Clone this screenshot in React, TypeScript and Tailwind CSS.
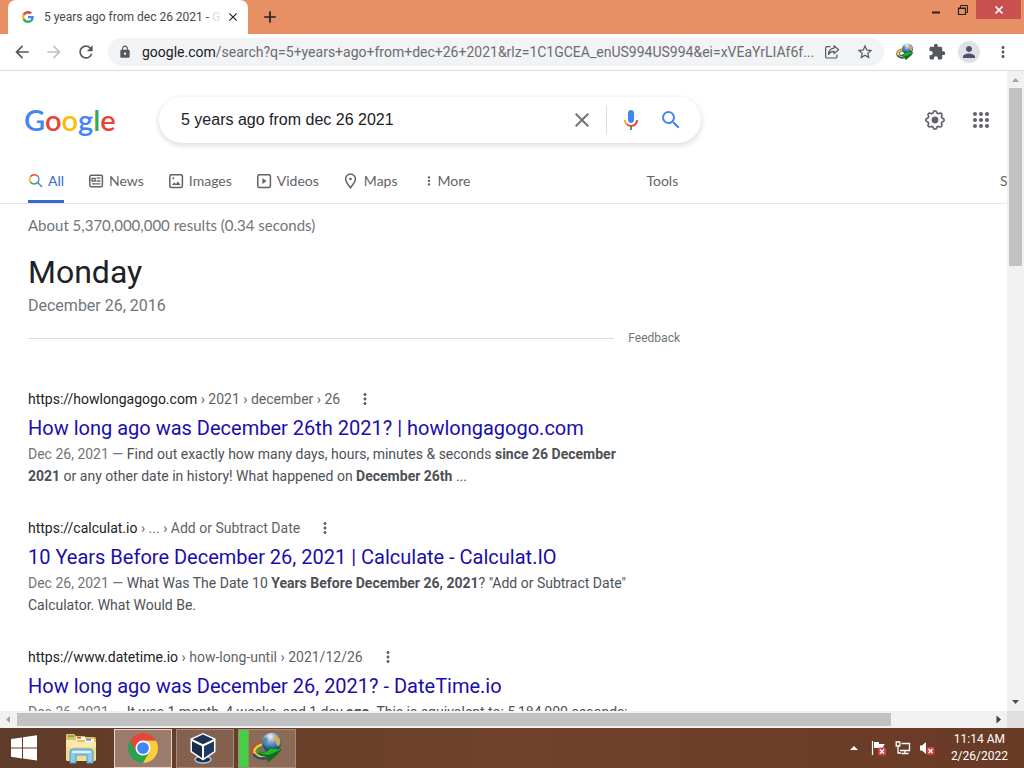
import type { ReactNode } from "react";
import {
  MdArrowBack,
  MdArrowForward,
  MdRefresh,
  MdLock,
  MdStarBorder,
  MdExtension,
  MdPerson,
  MdMoreVert,
  MdClose,
  MdAdd,
  MdSearch,
} from "react-icons/md";

function GoogleG({ className }: { className?: string }) {
  return (
    <svg viewBox="0 0 48 48" className={className} aria-hidden="true">
      <path fill="#EA4335" d="M24 9.5c3.54 0 6.71 1.22 9.21 3.6l6.85-6.85C35.9 2.38 30.47 0 24 0 14.62 0 6.51 5.38 2.56 13.22l7.98 6.19C12.43 13.72 17.74 9.5 24 9.5z" />
      <path fill="#4285F4" d="M46.98 24.55c0-1.57-.15-3.09-.38-4.55H24v9.02h12.94c-.58 2.96-2.26 5.48-4.78 7.18l7.73 6c4.51-4.18 7.09-10.36 7.09-17.65z" />
      <path fill="#FBBC05" d="M10.53 28.59c-.48-1.45-.76-2.99-.76-4.59s.27-3.14.76-4.59l-7.98-6.19C.92 16.46 0 20.12 0 24c0 3.88.92 7.54 2.56 10.78l7.97-6.19z" />
      <path fill="#34A853" d="M24 48c6.48 0 11.93-2.13 15.89-5.81l-7.73-6c-2.15 1.45-4.92 2.3-8.16 2.3-6.26 0-11.57-4.22-13.47-9.91l-7.98 6.19C6.51 42.62 14.62 48 24 48z" />
    </svg>
  );
}

function ShareIcon() {
  return (
    <svg viewBox="0 0 16 16" className="size-4" fill="none" stroke="currentColor" strokeWidth="1.2" strokeLinejoin="round" aria-hidden="true">
      <path d="M6.5 2.6H3.2Q1.6 2.6 1.6 4.2V12.4Q1.6 14 3.2 14H11.4Q13 14 13 12.4V10.5" />
      <path d="M10 1.8L14.6 5.7L10 9.6V7.3C7.4 7.3 5.6 8.4 4.4 10.4C4.6 6.8 6.6 4.6 10 4.1Z" />
    </svg>
  );
}

function IdmGlobe({ className }: { className?: string }) {
  return (
    <svg viewBox="0 0 32 32" className={className} aria-hidden="true">
      <defs>
        <radialGradient id="idmSphere" cx="0.45" cy="0.2" r="0.85">
          <stop offset="0" stopColor="#eef5fb" />
          <stop offset="0.35" stopColor="#7fa6d2" />
          <stop offset="0.7" stopColor="#2c5c9c" />
          <stop offset="1" stopColor="#122c55" />
        </radialGradient>
      </defs>
      <g fill="none" transform="rotate(-18 11 18)">
        <ellipse cx="11" cy="18" rx="10" ry="7" stroke="#d9422b" strokeWidth="2" />
        <ellipse cx="11.5" cy="18.3" rx="8.4" ry="5.6" stroke="#f9cb2d" strokeWidth="2.4" />
        <ellipse cx="12" cy="18.6" rx="6.4" ry="3.8" stroke="#2fa53a" strokeWidth="2" />
      </g>
      <path d="M2.5 22Q7 28.5 17 26" fill="none" stroke="#23488f" strokeWidth="2.2" />
      <circle cx="20.5" cy="10.5" r="9.8" fill="url(#idmSphere)" />
      <path d="M23 3Q27 3.5 29.4 8.5Q30 12 27.5 14.5Q24 12 25 9Q21.5 7 23 3Z" fill="#e3b23c" opacity="0.9" />
      <path d="M12 7Q15 4.5 17 7Q16.5 10 13.5 12Q11 10 12 7Z" fill="#4e8d62" opacity="0.7" />
      <path d="M6.5 21Q15 21 18.5 15.5L31 17L27 22L17 30.5L15.5 24.5Q10 25 6.5 21Z" fill="#0c6e1e" />
      <path d="M9 21Q17 20.5 19 16.5L30 17.5L19 22.5Q13 23.5 9 21Z" fill="#25b52c" />
    </svg>
  );
}

function ChromeLogo({ className }: { className?: string }) {
  return (
    <svg viewBox="0 0 48 48" className={className} aria-hidden="true">
      <path d="M3.22 12A24 24 0 0 0 24 48L34.4 30L24 24L13.6 30Z" fill="#2ea04f" />
      <path d="M44.78 12A24 24 0 0 1 24 48L34.4 30L24 12Z" fill="#fdce3c" />
      <path d="M3.22 12A24 24 0 0 1 44.78 12H24L13.6 30Z" fill="#e5463b" />
      <circle cx="24" cy="24" r="12" fill="#fff" />
      <circle cx="24" cy="24" r="9.4" fill="#4285f4" />
    </svg>
  );
}

function VirtualBoxLogo({ className }: { className?: string }) {
  return (
    <svg viewBox="0 0 32 32" className={className} aria-hidden="true">
      <ellipse cx="16" cy="27.5" rx="8" ry="3.6" fill="#182f52" stroke="#a9bdd6" strokeWidth="1.6" />
      <path d="M16 1L28.5 6.5V20L16 28.5L3.5 20V6.5Z" fill="#fff" />
      <path d="M16 2.6L26.4 7.2L16 12.2L5.6 7.2Z" fill="#1c3355" />
      <path d="M5 9.2L15 14.2V26L5 19.2Z" fill="#182c4c" />
      <path d="M27 9.2L17 14.2V26L27 19.2Z" fill="#1f3a63" />
    </svg>
  );
}

function ExplorerIcon({ className }: { className?: string }) {
  return (
    <svg viewBox="0 0 34 32" className={className} aria-hidden="true">
      <path d="M2 3Q2 2 3 2H10L12 4H20L22 5H30Q32 5 32 7V27H2Z" fill="#e6bf62" />
      <rect x="4" y="3.2" width="6" height="2" fill="#5cb95a" />
      <rect x="12" y="5" width="9" height="3" fill="#fff" />
      <rect x="13" y="5" width="4" height="1.6" fill="#d94b3a" />
      <rect x="21" y="7" width="9" height="3" fill="#fff" />
      <rect x="22" y="7" width="5" height="1.6" fill="#4c94d8" />
      <path d="M2 8H12L14 10H32V27Q32 29 30 29H4Q2 29 2 27Z" fill="#f9e9af" />
      <path d="M2 15H32V27Q32 29 30 29H4Q2 29 2 27Z" fill="#f5dd8d" />
      <path d="M6 31V20Q6 17 9 17H26Q29 17 29 20V31H23V23H12V31Z" fill="#8ccbee" stroke="#4a9bd0" strokeWidth="1" />
      <path d="M8 20Q8 19 10 19H25Q27 19 27 20V21H8Z" fill="#dff3fd" />
    </svg>
  );
}

const GEAR_PATH = Array.from({ length: 96 }, (_, i) => {
  const angle = (i / 96) * Math.PI * 2;
  const radius = 8.1 + Math.tanh(1.6 * Math.cos(8 * angle)) * 1.05;
  return `${i ? "L" : "M"}${(12 + radius * Math.sin(angle)).toFixed(2)} ${(12 - radius * Math.cos(angle)).toFixed(2)}`;
}).join("");

function GearIcon() {
  return (
    <svg viewBox="0 0 24 24" className="size-6" aria-hidden="true">
      <path d={GEAR_PATH + "Z"} fill="none" stroke="#5f6368" strokeWidth="1.7" strokeLinejoin="round" />
      <circle cx="12" cy="12" r="3.4" fill="#5f6368" />
    </svg>
  );
}

function AppsIcon() {
  return (
    <svg viewBox="0 0 24 24" className="size-6" fill="#5f6368" aria-hidden="true">
      {[6, 12, 18].map((cy) => [6, 12, 18].map((cx) => <circle key={`${cx}-${cy}`} cx={cx} cy={cy} r="2" />))}
    </svg>
  );
}

function MicIcon() {
  return (
    <svg viewBox="0 0 24 24" className="size-6" aria-hidden="true">
      <path fill="#4285f4" d="M12 15c1.66 0 3-1.31 3-2.97V4.98C15 3.34 13.66 2 12 2S9 3.34 9 4.98v7.05C9 13.69 10.34 15 12 15z" />
      <path fill="#34a853" d="M11 18.08h2V22h-2z" />
      <path fill="#f4b400" d="M7.05 16.87C5.78 15.59 5 13.8 5 12h2c0 1.37.56 2.52 1.46 3.41z" />
      <path fill="#ea4335" d="M12 16.93a4.97 4.97 0 0 1-3.54-1.55l-1.41 1.49A6.97 6.97 0 0 0 12 18.94c3.87 0 6.99-2.92 6.99-7h-1.99c0 2.92-2.24 4.99-5 4.99z" />
    </svg>
  );
}

function ColourSearchIcon() {
  return (
    <svg viewBox="0 0 16 16" className="size-4" fill="none" strokeWidth="1.5" aria-hidden="true">
      <path d="M2.4 9A4.6 4.6 0 0 1 2.6 3.5" stroke="#f4b400" />
      <path d="M2.6 3.5A4.6 4.6 0 0 1 9.5 3" stroke="#ea4335" />
      <path d="M9.5 3A4.6 4.6 0 0 1 9.6 9.4L14 14" stroke="#4285f4" />
      <path d="M9.6 9.4A4.6 4.6 0 0 1 2.4 9" stroke="#34a853" />
    </svg>
  );
}

function LineIcon({ children }: { children: ReactNode }) {
  return (
    <svg viewBox="0 0 16 16" className="size-4" fill="none" stroke="#5f6368" strokeWidth="1.5" aria-hidden="true">
      {children}
    </svg>
  );
}

const TABS: { label: string; icon: ReactNode }[] = [
  {
    label: "News",
    icon: (
      <LineIcon>
        <rect x="1.8" y="2.3" width="12.6" height="11.4" rx="1.5" />
        <path d="M4 5.3H7.2V8H4ZM8.6 5.2H12.4M8.6 8H12.4M4 10.8H12.4" strokeWidth="1.3" />
      </LineIcon>
    ),
  },
  {
    label: "Images",
    icon: (
      <LineIcon>
        <rect x="1.8" y="1.8" width="12.6" height="12.6" rx="1.5" />
        <path d="M4 12L6.3 9.2L8 11L10 8.5L12.4 12Z" fill="#5f6368" stroke="none" />
        <circle cx="5.3" cy="5.3" r="1" fill="#5f6368" stroke="none" />
      </LineIcon>
    ),
  },
  {
    label: "Videos",
    icon: (
      <LineIcon>
        <rect x="1.8" y="1.8" width="12.6" height="12.6" rx="1.5" />
        <path d="M6.4 5.2L10.6 8.1L6.4 11Z" fill="#5f6368" stroke="none" />
      </LineIcon>
    ),
  },
  {
    label: "Maps",
    icon: (
      <LineIcon>
        <path d="M7.5 14.8C5.5 12 2.6 9 2.6 6A4.9 4.9 0 0 1 12.4 6C12.4 9 9.5 12 7.5 14.8Z" />
        <circle cx="7.5" cy="6" r="1.3" fill="#5f6368" stroke="none" />
      </LineIcon>
    ),
  },
];

function Result({
  site,
  crumbs,
  title,
  children,
}: {
  site: string;
  crumbs: string;
  title: string;
  children: ReactNode;
}) {
  return (
    <article className="mb-[31px]">
      <div className="flex h-5 items-center text-sm text-[#5f6368]">
        <cite className="not-italic">
          <span className="text-[#202124]">{site}</span> {crumbs}
        </cite>
        <button type="button" aria-label="About this result" className="ml-4">
          <MdMoreVert className="size-[18px]" />
        </button>
      </div>
      <h3 className="mt-1.5 text-xl leading-[26px] text-[#1a0dab]">
        <a href="#">{title}</a>
      </h3>
      <p className="mt-0.5 text-sm leading-[22px] text-[#4d5156]">{children}</p>
    </article>
  );
}

function DateLabel() {
  return <span className="text-[#70757a]">Dec 26, 2021 — </span>;
}

function VerticalScrollbar() {
  return (
    <div className="flex w-[17px] shrink-0 flex-col items-center bg-[#f1f1f1]">
      <svg viewBox="0 0 17 17" className="size-[17px]" aria-hidden="true">
        <path d="M5 11L8.5 7L12 11Z" fill="#a3a3a3" />
      </svg>
      <div className="h-[178px] w-[13px] bg-[#c1c1c1]" />
      <svg viewBox="0 0 17 17" className="mt-auto size-[17px]" aria-hidden="true">
        <path d="M5 6L8.5 10L12 6Z" fill="#505050" />
      </svg>
    </div>
  );
}

export default function App() {
  return (
    <div className="flex h-screen flex-col overflow-hidden bg-white font-[Roboto,sans-serif]">
      <header className="flex h-[34px] shrink-0 bg-[#e79066] pl-2">
        <div className="flex w-60 items-center rounded-t-lg bg-white pr-2 pl-3.5 text-xs text-[#45474a]">
          <GoogleG className="size-3 shrink-0" />
          <span className="ml-2.5 flex-1 whitespace-nowrap">
            5 years ago from dec 26 2021 - <span className="text-[#dcdcdc]">G</span>
          </span>
          <button type="button" aria-label="Close tab" className="text-[#202124]">
            <MdClose className="size-3.5" />
          </button>
        </div>
        <button type="button" aria-label="New tab" className="ml-3 text-[#202124]">
          <MdAdd className="size-5" />
        </button>
        <div className="ml-auto flex items-start">
          <button type="button" aria-label="Minimize" className="flex h-[19px] w-7 items-center justify-center">
            <svg viewBox="0 0 10 10" className="size-2.5" aria-hidden="true">
              <path d="M1 7.5H9" stroke="#2b1d18" strokeWidth="2" />
            </svg>
          </button>
          <button type="button" aria-label="Restore" className="flex h-[19px] w-[26px] items-center justify-center">
            <svg viewBox="0 0 12 12" className="size-3" fill="none" stroke="#2b1d18" aria-hidden="true">
              <path d="M1.5 4.5H8.5V10.5H1.5ZM1 4H9" strokeWidth="1.2" />
              <path d="M3.5 4V1.5H10.5V8.5H8.5" />
            </svg>
          </button>
          <button type="button" aria-label="Close window" className="mr-[3px] flex h-[19px] w-[45px] items-center justify-center bg-[#c8504f] text-white">
            <svg viewBox="0 0 10 10" className="size-2.5" stroke="currentColor" strokeWidth="1.7" aria-hidden="true">
              <path d="M1.5 1.5L8.5 8.5M8.5 1.5L1.5 8.5" />
            </svg>
          </button>
        </div>
      </header>

      <div className="flex h-[37px] shrink-0 items-center border-b border-[#d9dbde] bg-white pr-3 pl-3 text-[#55585c]">
        <button type="button" aria-label="Back">
          <MdArrowBack className="size-5" />
        </button>
        <button type="button" aria-label="Forward" className="ml-3 text-[#bfc1c3]">
          <MdArrowForward className="size-5" />
        </button>
        <button type="button" aria-label="Reload" className="ml-3">
          <MdRefresh className="size-5" />
        </button>
        <div className="ml-3 flex h-7 min-w-0 flex-1 items-center rounded-full bg-[#f1f3f4] px-2.5">
          <MdLock className="size-3.5 shrink-0" />
          <p className="ml-2.5 min-w-0 flex-1 text-sm whitespace-nowrap text-[#6a6d71]">
            <span className="text-[#202124]">google.com</span>
            /search?q=5+years+ago+from+dec+26+2021&amp;rlz=1C1GCEA_enUS994US994&amp;ei=xVEaYrLIAf6f...
          </p>
          <button type="button" aria-label="Share" className="ml-2">
            <ShareIcon />
          </button>
          <button type="button" aria-label="Bookmark" className="ml-4">
            <MdStarBorder className="size-[18px]" />
          </button>
        </div>
        <button type="button" aria-label="Download manager" className="ml-3">
          <IdmGlobe className="size-[18px]" />
        </button>
        <button type="button" aria-label="Extensions" className="ml-3.5">
          <MdExtension className="size-[18px]" />
        </button>
        <button type="button" aria-label="Profile" className="ml-3 flex size-[22px] items-center justify-center rounded-full bg-[#dfe1e8] text-[#4d5366]">
          <MdPerson className="size-[18px]" />
        </button>
        <button type="button" aria-label="Menu" className="ml-3.5">
          <MdMoreVert className="size-[18px]" />
        </button>
      </div>

      <div className="flex min-h-0 flex-1">
        <main className="min-w-0 flex-1 overflow-hidden">
          <div className="flex items-center pt-[26px] pr-3.5 pl-6">
            <a href="#" aria-label="Google" className="w-[135px] shrink-0 font-[Lato,sans-serif] text-[29px] leading-[46px] font-semibold">
              <span className="text-[#4285f4]">G</span>
              <span className="text-[#ea4335]">o</span>
              <span className="text-[#fbbc05]">o</span>
              <span className="text-[#4285f4]">g</span>
              <span className="text-[#34a853]">l</span>
              <span className="text-[#ea4335]">e</span>
            </a>
            <form className="flex h-[46px] w-[542px] items-center rounded-full bg-white pr-[18px] pl-[22px] shadow-[0_2px_5px_1px_rgba(64,60,67,0.16)]">
              <input
                aria-label="Search"
                defaultValue="5 years ago from dec 26 2021"
                className="min-w-0 flex-1 bg-transparent font-['Liberation_Sans',sans-serif] text-base text-[#202124] outline-none"
              />
              <button type="button" aria-label="Clear" className="text-[#70757a]">
                <MdClose className="size-6" />
              </button>
              <span className="ml-3 h-7 border-l border-[#dadce0]" />
              <button type="button" aria-label="Search by voice" className="ml-3">
                <MicIcon />
              </button>
              <button type="submit" aria-label="Search" className="ml-4 text-[#4285f4]">
                <MdSearch className="size-6" />
              </button>
            </form>
            <button type="button" aria-label="Settings" className="ml-auto">
              <GearIcon />
            </button>
            <button type="button" aria-label="Google apps" className="ml-[22px]">
              <AppsIcon />
            </button>
          </div>

          <nav className="mt-4 flex h-[45px] items-stretch gap-6 border-b border-[#e4e6e9] pb-0 pl-7 font-[Lato,sans-serif] text-sm text-[#5f6368]">
            <a href="#" className="flex items-center gap-1 border-b-[3px] border-[#3569cc] pt-0.5 text-[#3569cc]">
              <ColourSearchIcon />
              All
            </a>
            {TABS.map((tab) => (
              <a key={tab.label} href="#" className="flex items-center gap-[5px]">
                {tab.icon}
                {tab.label}
              </a>
            ))}
            <button type="button" className="flex items-center gap-0.5">
              <MdMoreVert className="size-3.5" />
              More
            </button>
            <button type="button" className="ml-[152px]">
              Tools
            </button>
            <span className="ml-auto flex w-[7px] items-center">S</span>
          </nav>

          <div className="pl-7">
            <p className="mt-[9px] font-[Lato,sans-serif] text-[15px] leading-6 text-[#70757a]">
              About 5,370,000,000 results (0.34 seconds)
            </p>
            <section className="w-[652px]">
              <h2 className="mt-[15px] text-[32px] leading-10 text-[#202124]">Monday</h2>
              <p className="mt-0.5 text-base leading-6 text-[#70757a]">December 26, 2016</p>
              <div className="mt-2.5 flex h-5 items-center">
                <hr className="flex-1 border-[#dadce0]" />
                <a href="#" className="ml-3.5 text-xs text-[#70757a]">
                  Feedback
                </a>
              </div>
            </section>
            <section className="mt-[41px] w-[600px]">
              <Result
                site="https://howlongagogo.com"
                crumbs="› 2021 › december › 26"
                title="How long ago was December 26th 2021? | howlongagogo.com"
              >
                <DateLabel />
                Find out exactly how many days, hours, minutes &amp; seconds <b>since 26 December 2021</b> or any other
                date in history! What happened on <b>December 26th</b> ...
              </Result>
              <Result
                site="https://calculat.io"
                crumbs="› ... › Add or Subtract Date"
                title="10 Years Before December 26, 2021 | Calculate - Calculat.IO"
              >
                <DateLabel />
                What Was The Date 10 <b>Years Before December 26, 2021</b>? "Add or Subtract Date" Calculator. What
                Would Be.
              </Result>
              <Result
                site="https://www.datetime.io"
                crumbs="› how-long-until › 2021/12/26"
                title="How long ago was December 26, 2021? - DateTime.io"
              >
                <DateLabel />
                It was 1 month, 4 weeks, and 1 day <b>ago</b>. This is equivalent to: 5,184,000 seconds;
              </Result>
            </section>
          </div>
        </main>
        <VerticalScrollbar />
      </div>

      <div className="flex h-[17px] shrink-0 items-center bg-[#f1f1f1]">
        <svg viewBox="0 0 17 17" className="size-[17px]" aria-hidden="true">
          <path d="M10 5L6 8.5L10 12Z" fill="#a3a3a3" />
        </svg>
        <div className="h-[13px] w-[874px] bg-[#c1c1c1]" />
        <svg viewBox="0 0 17 17" className="ml-auto size-[17px]" aria-hidden="true">
          <path d="M6.5 4.5L11 8.5L6.5 12.5Z" fill="#404040" />
        </svg>
        <div className="h-full w-[17px] bg-[#e2e0df]" />
      </div>

      <footer className="flex h-10 shrink-0 items-center bg-linear-to-r from-[#5f3b29] via-[#70422b] to-[#693b26] text-white">
        <button type="button" aria-label="Start" className="ml-2.5">
          <svg viewBox="0 0 28 28" className="size-7" fill="#fff" aria-hidden="true">
            <path d="M1 5L12 3.4V13.4H1ZM13 3.2L27 1.2V13.4H13ZM1 14.4H12V24.4L1 22.8ZM13 14.4H27V26.6L13 24.6Z" />
          </svg>
        </button>
        <button type="button" aria-label="File Explorer" className="ml-[26px]">
          <ExplorerIcon className="h-8 w-[34px]" />
        </button>
        <button type="button" aria-label="Chrome" className="ml-4 flex h-[39px] w-[58px] items-center justify-center border border-[#e5d5cc] bg-[#9b7b6c]">
          <ChromeLogo className="size-[30px]" />
        </button>
        <button type="button" aria-label="VirtualBox" className="ml-1 flex h-[39px] w-[58px] items-center justify-center border border-[#a78a7b] bg-[#84604f] pr-1">
          <VirtualBoxLogo className="size-8" />
        </button>
        <button type="button" aria-label="Internet Download Manager" className="ml-1 flex h-[39px] w-[58px] items-center justify-center border border-[#a78a7b] bg-linear-to-r from-[#46cf46] from-16% to-[#8b6a56] to-18%">
          <IdmGlobe className="size-8" />
        </button>
        <div className="ml-auto flex items-center">
          <svg viewBox="0 0 8 8" className="size-2" fill="#fff" aria-hidden="true">
            <path d="M0 6L4 2L8 6Z" />
          </svg>
          <svg viewBox="0 0 16 16" className="ml-[13px] size-4" aria-hidden="true">
            <path d="M1.5 1V15" stroke="#fff" strokeWidth="1.2" />
            <path d="M3 2H8V4H14L12 6.5L14 9H7V8H3Z" fill="#fff" />
            <rect x="7" y="7.5" width="8" height="8" rx="1.5" fill="#d2404a" />
            <path d="M9 9.5L13 13.5M13 9.5L9 13.5" stroke="#fff" strokeWidth="1.3" />
          </svg>
          <svg viewBox="0 0 16 16" className="ml-2 size-4" fill="none" stroke="#fff" strokeWidth="1.3" aria-hidden="true">
            <path d="M6.5 3.5H14.5V10.5H5M10 10.5V13.5M6.5 13.5H13.5M3 6.5V13H6" />
            <path d="M1.2 2H4.8V6H1.2Z" />
          </svg>
          <svg viewBox="0 0 16 16" className="ml-2 size-4" aria-hidden="true">
            <path d="M1 5.5H3L7 2V14L3 10.5H1Z" fill="#fff" />
            <rect x="7.5" y="7" width="8" height="8" rx="2" fill="#d2404a" />
            <path d="M9.5 9L13.5 13M13.5 9L9.5 13" stroke="#fff" strokeWidth="1.3" />
          </svg>
          <div className="mr-4 ml-4 text-center text-xs leading-[17px]">
            <p>11:14 AM</p>
            <p>2/26/2022</p>
          </div>
        </div>
      </footer>
    </div>
  );
}
